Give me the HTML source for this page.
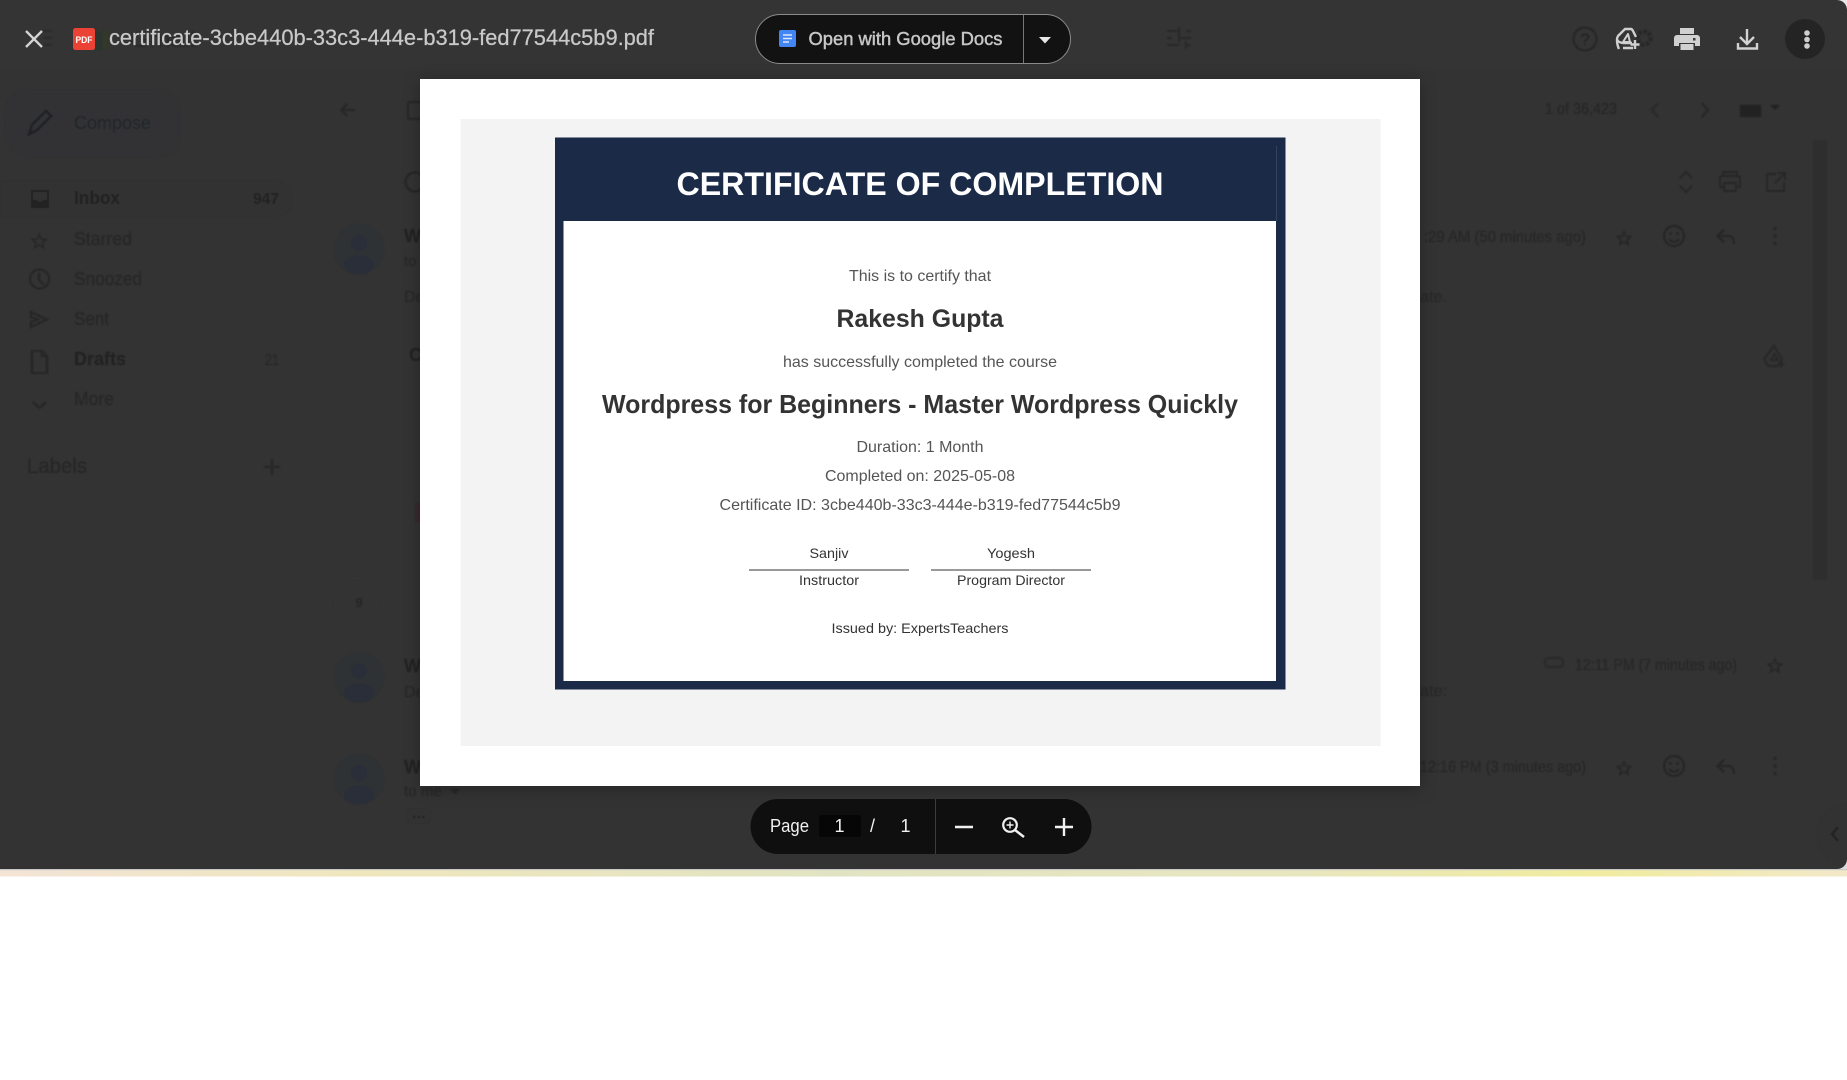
<!DOCTYPE html>
<html lang="en">
<head>
<meta charset="utf-8">
<title>certificate-3cbe440b-33c3-444e-b319-fed77544c5b9.pdf</title>
<style>
html,body{margin:0;padding:0;background:#fff;width:1847px;height:1080px;overflow:hidden}
svg{display:block}
text{font-family:"Liberation Sans",Arial,sans-serif}
.c{text-anchor:middle}
</style>
</head>
<body>
<svg xmlns="http://www.w3.org/2000/svg" width="1847" height="1080" viewBox="0 0 1847 1080">
<defs>
<linearGradient id="band" x1="0" x2="1" y1="0" y2="0">
<stop offset="0" stop-color="#f3e4d6"/><stop offset=".2" stop-color="#efe6bd"/><stop offset=".45" stop-color="#e1e4c2"/><stop offset=".7" stop-color="#e8e6bf"/><stop offset=".86" stop-color="#f1ec9f"/><stop offset="1" stop-color="#f2e8c8"/>
</linearGradient>
<filter id="b" x="-5%" y="-5%" width="110%" height="110%"><feGaussianBlur stdDeviation="0.5"/></filter>
<filter id="s" x="-10%" y="-10%" width="120%" height="120%"><feDropShadow dx="0" dy="3" stdDeviation="8" flood-color="#000" flood-opacity=".28"/></filter>
<path id="star" d="M22 9.24l-7.19-.62L12 2 9.19 8.63 2 9.24l5.46 4.73L5.82 21 12 17.27 18.18 21l-1.63-7.03L22 9.24zM12 15.4l-3.76 2.27 1-4.28-3.32-2.88 4.38-.38L12 6.1l1.71 4.04 4.38.38-3.32 2.88 1 4.28L12 15.4z"/>
<g id="person"><circle cx="0" cy="-6" r="8"/><ellipse cx="0" cy="16" rx="15" ry="9.5"/></g>
<g id="actions" fill="none" stroke="#252525" stroke-width="1.9">
<use href="#star" transform="translate(-9.8,-9.6) scale(.82)" fill="#252525" stroke="none"/>
<circle cx="50" cy="-2" r="10"/><circle cx="46.5" cy="-4.5" r="1.2" fill="#252525" stroke="none"/><circle cx="53.5" cy="-4.5" r="1.2" fill="#252525" stroke="none"/><path d="M45 1.5q5 4.500 10 0"/>
<path d="M100 -8l-6.500 6 6.500 6M94 -2h10q6 0 6 8"/>
<circle cx="151" cy="-9.500" r="1.700" fill="#252525" stroke="none"/><circle cx="151" cy="-2" r="1.700" fill="#252525" stroke="none"/><circle cx="151" cy="5.500" r="1.700" fill="#252525" stroke="none"/>
</g>
</defs>

<!-- page behind -->
<rect width="1847" height="1080" fill="#fff"/>
<rect x="0" y="870" width="1847" height="6.5" fill="url(#band)"/>
<rect x="0" y="869" width="1847" height="1.2" fill="#c9c9c9"/>

<!-- dimmed app -->
<rect x="0" y="0" width="1847" height="869" fill="#323332"/>
<rect x="0" y="0" width="1847" height="70" fill="#343534" opacity=".6"/>
<path d="M1837 0h10v10a10 10 0 0 0-10-10z" fill="#e8e8e8"/>

<g filter="url(#b)">
<!-- faint gmail header -->
<path d="M12 31h8M12 38h8M12 45h8" stroke="#2a2a2a" stroke-width="1.5" transform="translate(32,0)"/>
<path d="M96 50V30l6 5V50z" fill="#2b352e"/>
<path d="M103 32l5-4v22h-5z" fill="#33372c"/>
<text x="130" y="47" font-size="22" fill="#2c2c2c" textLength="66" lengthAdjust="spacingAndGlyphs">Gmail</text>
<g fill="none" stroke="#2a2a2a" stroke-width="2">
<path d="M1167 31h12M1186 31h5M1167 38h5M1179 38h12M1167 45h12M1186 45h5M1179 27v8M1179 34v8M1186 41v8"/>
</g>

<!-- compose -->
<rect x="4" y="89" width="177" height="69" rx="27" fill="#303334"/>
<path d="M29 134l3-9 14-14 5 5-14 14-8 4z" fill="none" stroke="#222426" stroke-width="2.6"/>
<text x="74" y="129" font-size="18" fill="#232527" textLength="77" lengthAdjust="spacingAndGlyphs">Compose</text>
<!-- sidebar -->
<path d="M0 180h273a19 19 0 0 1 0 38H0z" fill="#313231"/>
<path d="M31 190h18v18H31zM33 192v8h4q3 4 6 0h4v-8z" fill="#212223" fill-rule="evenodd"/>
<text x="74" y="204" font-size="18" font-weight="bold" fill="#222" textLength="46" lengthAdjust="spacingAndGlyphs">Inbox</text>
<text x="253" y="204" font-size="16" font-weight="bold" fill="#242424" textLength="26" lengthAdjust="spacingAndGlyphs">947</text>
<use href="#star" transform="translate(29,231) scale(.85)" fill="#262626"/>
<text x="74" y="245" font-size="18" fill="#252525" textLength="58" lengthAdjust="spacingAndGlyphs">Starred</text>
<g fill="none" stroke="#262626" stroke-width="1.9">
<circle cx="39.500" cy="279" r="9.500"/><path d="M39 273v7l5 5"/>
<path d="M31 312l16 7.500-16 7.500v-5l7-2.500-7-2.500z"/>
<path d="M32 351h10l5 5v17H32zM42 351v5h5"/>
<path d="M33 402l6.500 6 6.500-6"/>
</g>
<text x="74" y="285" font-size="18" fill="#252525" textLength="68" lengthAdjust="spacingAndGlyphs">Snoozed</text>
<text x="74" y="325" font-size="18" fill="#252525" textLength="35" lengthAdjust="spacingAndGlyphs">Sent</text>
<text x="74" y="365" font-size="18" font-weight="bold" fill="#222" textLength="52" lengthAdjust="spacingAndGlyphs">Drafts</text>
<text x="265" y="365" font-size="16" fill="#282828" textLength="14" lengthAdjust="spacingAndGlyphs">21</text>
<text x="74" y="405" font-size="18" fill="#252525" textLength="40" lengthAdjust="spacingAndGlyphs">More</text>
<text x="27" y="473" font-size="21" fill="#252525" textLength="60" lengthAdjust="spacingAndGlyphs">Labels</text>
<path d="M272 459v16M264 467h16" stroke="#282828" stroke-width="1.800"/>

<!-- toolbar + conversation left -->
<path d="M355 110h-14M347 104l-6 6 6 6" fill="none" stroke="#272727" stroke-width="1.800"/>
<rect x="408" y="102" width="16" height="17" rx="2" fill="none" stroke="#272727" stroke-width="2"/>
<circle cx="415" cy="182" r="9.500" fill="none" stroke="#252525" stroke-width="2"/>
<circle cx="359" cy="249" r="25" fill="#2f3136"/><use href="#person" transform="translate(359,249)" fill="#2a2e38"/>
<text x="404" y="242" font-size="18" font-weight="bold" fill="#222">W</text>
<text x="404" y="266" font-size="15" fill="#282828">to</text>
<text x="404" y="302" font-size="16" fill="#282828">De</text>
<text x="409" y="361" font-size="18" font-weight="bold" fill="#232323">C</text>
<rect x="415" y="503" width="6" height="19" fill="#382b2d"/>
<circle cx="359" cy="602" r="24" fill="none" stroke="#353535" stroke-width="1.500"/>
<text class="c" x="359" y="607" font-size="13" font-weight="bold" fill="#252525">9</text>
<circle cx="359" cy="677" r="25" fill="#2f3136"/><use href="#person" transform="translate(359,677)" fill="#2a2e38"/>
<text x="404" y="672" font-size="18" font-weight="bold" fill="#222">W</text>
<text x="404" y="697" font-size="16" fill="#282828">De</text>
<circle cx="359" cy="779" r="25" fill="#2f3136"/><use href="#person" transform="translate(359,779)" fill="#2a2e38"/>
<text x="404" y="773" font-size="18" font-weight="bold" fill="#222">W</text>
<text x="404" y="796" font-size="15" fill="#282828" textLength="38" lengthAdjust="spacingAndGlyphs">to me</text>
<path d="M450 789l5 5 5-5z" fill="#282828"/>
<rect x="406" y="808" width="26" height="16" rx="8" fill="#303030"/>
<path d="M413 817h12" stroke="#262626" stroke-width="2.500" stroke-dasharray="2.500 2"/>

<!-- right conversation -->
<text x="1545" y="114" font-size="16" fill="#252525" textLength="72" lengthAdjust="spacingAndGlyphs">1 of 36,423</text>
<path d="M1658 103l-6 7 6 7" fill="none" stroke="#2a2a2a" stroke-width="2"/>
<path d="M1702 103l6 7-6 7" fill="none" stroke="#272727" stroke-width="2"/>
<rect x="1740" y="105" width="21" height="12" fill="#212223"/>
<path d="M1770 105h10l-5 5z" fill="#232323"/>
<rect x="1813" y="140" width="14" height="440" fill="#2f2f2e"/>
<g fill="none" stroke="#272727" stroke-width="1.900">
<path d="M1680 178l6-6 6 6M1680 186l6 6 6-6"/>
<path d="M1723 176v-4h14v4M1723 187h-3v-9a2 2 0 0 1 2-2h16a2 2 0 0 1 2 2v9h-3M1724 183h12v8h-12z"/>
<path d="M1776 174h-9v17h17v-9M1778 173h7v7M1785 173l-10 10"/>
</g>
<text x="1424" y="242" font-size="16" fill="#262626" textLength="162" lengthAdjust="spacingAndGlyphs">:29 AM (50 minutes ago)</text>
<use href="#actions" transform="translate(1624,238)"/>
<text x="1420" y="302" font-size="16" fill="#282828" textLength="27" lengthAdjust="spacingAndGlyphs">ate.</text>
<path d="M1774 346l8 13-4 7h-10l-4-7zM1771 360h7l-3.500-6zM1781 361v6M1778 364h6" fill="none" stroke="#282828" stroke-width="1.800"/>
<rect x="1545" y="658" width="18" height="9" rx="4" fill="none" stroke="#2a2a2a" stroke-width="2"/>
<text x="1575" y="670" font-size="16" fill="#262626" textLength="162" lengthAdjust="spacingAndGlyphs">12:11 PM (7 minutes ago)</text>
<use href="#star" transform="translate(1765,656) scale(.82)" fill="#252525"/>
<text x="1420" y="696" font-size="16" fill="#282828" textLength="27" lengthAdjust="spacingAndGlyphs">ate:</text>
<text x="1420" y="772" font-size="16" fill="#262626" textLength="166" lengthAdjust="spacingAndGlyphs">12:16 PM (3 minutes ago)</text>
<use href="#actions" transform="translate(1624,768)"/>
<circle cx="1847" cy="834" r="30" fill="#313231"/>
<path d="M1838 827l-6 7 6 7" fill="none" stroke="#232323" stroke-width="2.200"/>
</g>
<path d="M1837 869h10v-10a10 10 0 0 1-10 10z" fill="#dcdcdc"/>

<!-- top bar -->
<path d="M26 31l16 16M42 31l-16 16" stroke="#d4d4d4" stroke-width="2.300" fill="none"/>
<rect x="73" y="28" width="22" height="22" rx="2.500" fill="#ea4335"/>
<text class="c" x="84" y="43" font-size="9.500" font-weight="bold" fill="#fff" textLength="17" lengthAdjust="spacingAndGlyphs">PDF</text>
<text x="109" y="45" font-size="22.500" fill="#c8c9c8" stroke="#c8c9c8" stroke-width=".25" textLength="545" lengthAdjust="spacingAndGlyphs">certificate-3cbe440b-33c3-444e-b319-fed77544c5b9.pdf</text>

<rect x="755.500" y="14.500" width="315" height="49" rx="24.500" fill="#121212" stroke="#8a8a8a" stroke-width="1"/>
<rect x="1023" y="15" width="1" height="48" fill="#777"/>
<rect x="779" y="30" width="17" height="17" rx="2" fill="#4285f4"/>
<path d="M783 35h9M783 38.500h9M783 42h6" stroke="#dce8fc" stroke-width="1.400"/>
<text x="808.500" y="45" font-size="18.500" fill="#c6c7c6" stroke="#c6c7c6" stroke-width=".45" textLength="194" lengthAdjust="spacingAndGlyphs">Open with Google Docs</text>
<path d="M1039 37h12l-6 6.500z" fill="#e8e8e8"/>

<g filter="url(#b)">
<circle cx="1585" cy="39" r="11.500" fill="none" stroke="#262626" stroke-width="2"/>
<text class="c" x="1585" y="45" font-size="17" fill="#232323">?</text>
<circle cx="1644" cy="38" r="6.500" fill="none" stroke="#262626" stroke-width="4" stroke-dasharray="3 2"/>
</g>
<g fill="none" stroke="#cfcfcf" stroke-width="2.400" stroke-linejoin="round">
<path d="M1632 43h-9q-6-1-6-4 0-1 1-3l7-7h6q1 0 2 2l3 6"/>
<path d="M1619 49q-2-4-2-9M1623 48h10"/>
<path d="M1628 34l-5 8h7z" stroke-width="2"/>
<path d="M1635 40v9M1630.500 44.500h9"/>
</g>
<path d="M1680 28h14v6h-14z M1677 35h20a3 3 0 0 1 3 3v8h-5v-3h-16v3h-5v-8a3 3 0 0 1 3-3z M1680.500 44h13v6h-13z" fill="#cfd0cf"/>
<rect x="1693" y="38" width="2.500" height="2.500" fill="#3a3a3a"/>
<g fill="none" stroke="#d2d2d2" stroke-width="2.400">
<path d="M1747 29v15M1740 37l7 7 7-7"/>
<path d="M1738 43v5.500h19V43"/>
</g>
<circle cx="1805" cy="39" r="20" fill="#232423"/>
<g fill="#cfcfcf"><circle cx="1807" cy="33" r="2.800"/><circle cx="1807" cy="39.500" r="2.800"/><circle cx="1807" cy="46" r="2.800"/></g>

<!-- PDF page -->
<rect x="420" y="79" width="1000" height="707" fill="#fff" filter="url(#s)"/>
<rect x="460.500" y="119" width="920" height="627" fill="#f3f3f3"/>
<rect x="555" y="137.500" width="730.500" height="552" fill="#1a2a47"/>
<rect x="563.500" y="221" width="712.500" height="460" fill="#fff"/>
<rect x="1276" y="146" width="1" height="75" fill="#33435f"/>
<text class="c" x="920" y="195" font-size="32" font-weight="bold" fill="#fff" textLength="487" lengthAdjust="spacingAndGlyphs">CERTIFICATE OF COMPLETION</text>
<text class="c" x="920" y="281" font-size="16" fill="#555" textLength="142" lengthAdjust="spacingAndGlyphs">This is to certify that</text>
<text class="c" x="920" y="327" font-size="25" font-weight="bold" fill="#333" textLength="167" lengthAdjust="spacingAndGlyphs">Rakesh Gupta</text>
<text class="c" x="920" y="367" font-size="16" fill="#555" textLength="274" lengthAdjust="spacingAndGlyphs">has successfully completed the course</text>
<text class="c" x="920" y="413" font-size="26" font-weight="bold" fill="#333" textLength="636" lengthAdjust="spacingAndGlyphs">Wordpress for Beginners - Master Wordpress Quickly</text>
<text class="c" x="920" y="452" font-size="16" fill="#555" textLength="127" lengthAdjust="spacingAndGlyphs">Duration: 1 Month</text>
<text class="c" x="920" y="481" font-size="16" fill="#555" textLength="190" lengthAdjust="spacingAndGlyphs">Completed on: 2025-05-08</text>
<text class="c" x="920" y="510" font-size="16" fill="#555" textLength="401" lengthAdjust="spacingAndGlyphs">Certificate ID: 3cbe440b-33c3-444e-b319-fed77544c5b9</text>
<text class="c" x="829" y="558" font-size="14" fill="#333" textLength="39" lengthAdjust="spacingAndGlyphs">Sanjiv</text>
<text class="c" x="1011" y="558" font-size="14" fill="#333" textLength="48" lengthAdjust="spacingAndGlyphs">Yogesh</text>
<rect x="749" y="569.500" width="160" height="1" fill="#333"/>
<rect x="931" y="569.500" width="160" height="1" fill="#333"/>
<text class="c" x="829" y="585" font-size="14" fill="#333" textLength="60" lengthAdjust="spacingAndGlyphs">Instructor</text>
<text class="c" x="1011" y="585" font-size="14" fill="#333" textLength="108" lengthAdjust="spacingAndGlyphs">Program Director</text>
<text class="c" x="920" y="633" font-size="14" fill="#333" textLength="177" lengthAdjust="spacingAndGlyphs">Issued by: ExpertsTeachers</text>

<!-- page toolbar -->
<rect x="750.500" y="799" width="341" height="55" rx="27.500" fill="#0f0f0f"/>
<rect x="935" y="799" width="1" height="55" fill="#3c3c3c"/>
<rect x="819" y="815" width="42" height="22" rx="2" fill="#060606"/>
<text x="770" y="832" font-size="18.500" fill="#f1f1f1" textLength="39" lengthAdjust="spacingAndGlyphs">Page</text>
<text class="c" x="839.500" y="832" font-size="18" fill="#f1f1f1">1</text>
<text class="c" x="872.500" y="832" font-size="18" fill="#f1f1f1">/</text>
<text class="c" x="905.500" y="832" font-size="18" fill="#f1f1f1">1</text>
<path d="M955 827h18" stroke="#f1f1f1" stroke-width="2.400"/>
<circle cx="1010" cy="825" r="6.800" fill="none" stroke="#f1f1f1" stroke-width="2.200"/>
<path d="M1015 830l9 7" stroke="#f1f1f1" stroke-width="2.400"/>
<path d="M1010 821.500v7M1006.500 825h7" stroke="#f1f1f1" stroke-width="1.400"/>
<path d="M1055 827h18M1064 818v18" stroke="#f1f1f1" stroke-width="2.400"/>
</svg>
</body>
</html>
